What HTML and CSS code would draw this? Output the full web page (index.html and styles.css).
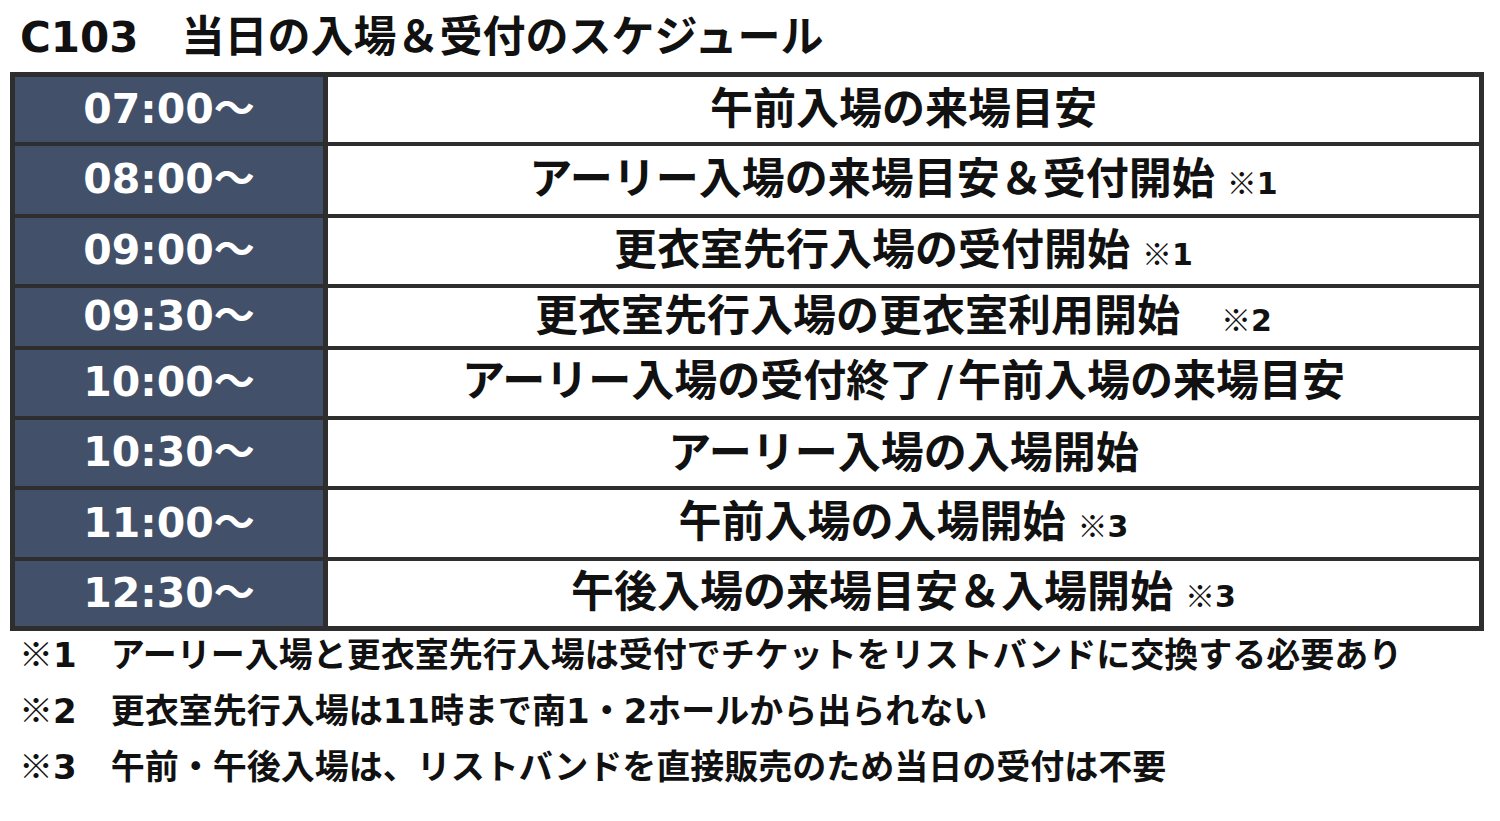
FILE: index.html
```html
<!DOCTYPE html>
<html lang="ja">
<head>
<meta charset="utf-8">
<title>C103 当日の入場＆受付のスケジュール</title>
<link rel="stylesheet" href="styles.css">
</head>
<body>
<div class="page">
  <h1 class="title"><span class="n">C103</span><span class="jp">　当日の入場＆受付のスケジュール</span></h1>
  <div class="schedule">
    <div class="time">07:00～</div>
    <div class="ev">午前入場の来場目安</div>

    <div class="time">08:00～</div>
    <div class="ev">アーリー入場の来場目安＆受付開始<span class="ref">※<span class="n">1</span></span></div>

    <div class="time">09:00～</div>
    <div class="ev">更衣室先行入場の受付開始<span class="ref">※<span class="n">1</span></span></div>

    <div class="time">09:30～</div>
    <div class="ev">更衣室先行入場の更衣室利用開始<span class="ref wide">※<span class="n">2</span></span></div>

    <div class="time">10:00～</div>
    <div class="ev">アーリー入場の受付終了<span class="n slash">/</span>午前入場の来場目安</div>

    <div class="time">10:30～</div>
    <div class="ev">アーリー入場の入場開始</div>

    <div class="time">11:00～</div>
    <div class="ev">午前入場の入場開始<span class="ref">※<span class="n">3</span></span></div>

    <div class="time">12:30～</div>
    <div class="ev">午後入場の来場目安＆入場開始<span class="ref">※<span class="n">3</span></span></div>
  </div>
  <div class="notes">
    <p class="note"><span class="mk">※<span class="n">1</span>　</span>アーリー入場と更衣室先行入場は受付でチケットをリストバンドに交換する必要あり</p>
    <p class="note"><span class="mk">※<span class="n">2</span>　</span>更衣室先行入場は<span class="n">11</span>時まで南<span class="n">1</span>・<span class="n">2</span>ホールから出られない</p>
    <p class="note"><span class="mk">※<span class="n">3</span>　</span>午前・午後入場は、リストバンドを直接販売のため当日の受付は不要</p>
  </div>
</div>
</body>
</html>
```

FILE: styles.css
```css
html, body {
  margin: 0;
  padding: 0;
  background: #ffffff;
}

body {
  width: 1500px;
  height: 821px;
  overflow: hidden;
  font-family: "Noto Sans CJK JP", sans-serif;
  font-weight: 700;
  color: #111111;
}

.page {
  display: flex;
  flex-direction: column;
}

.n {
  font-family: "DejaVu Sans", "Noto Sans CJK JP", sans-serif;
  line-height: 1;
}

.title {
  margin: 0;
  height: 72px;
  box-sizing: border-box;
  padding: 0 0 6px 20px;
  line-height: 66px;
  font-size: 43px;
  font-weight: 700;
  white-space: nowrap;
}

.title .n {
  font-size: 42px;
}

.schedule {
  margin-left: 10px;
  width: 1474px;
  box-sizing: border-box;
  display: grid;
  grid-template-columns: 308px 1fr;
  grid-template-rows: 65px 68px 66px 58px 66px 66px 67px 65px;
  column-gap: 5px;
  row-gap: 4px;
  padding: 5px;
  background: #2e2e2e;
}

.time {
  background: #425169;
  color: #ffffff;
  display: flex;
  align-items: center;
  justify-content: center;
  font-family: "DejaVu Sans", "Noto Sans CJK JP", sans-serif;
  font-size: 41px;
  padding-bottom: 10px;
  box-sizing: border-box;
  white-space: nowrap;
}

.ev {
  background: #ffffff;
  display: flex;
  align-items: baseline;
  justify-content: center;
  padding-bottom: 8px;
  box-sizing: border-box;
  font-size: 43px;
  line-height: 1;
  white-space: nowrap;
  align-content: center;
  flex-wrap: wrap;
}

.slash {
  margin: 0 5px;
}

.ref {
  font-size: 30px;
  margin-left: 12px;
}

.ref.wide {
  margin-left: 41px;
}

.notes {
  margin-top: -2px;
  padding-left: 19px;
  display: flex;
  flex-direction: column;
  gap: 8px;
}

.note {
  margin: 0;
  font-size: 34px;
  line-height: 48px;
  white-space: nowrap;
}
```
